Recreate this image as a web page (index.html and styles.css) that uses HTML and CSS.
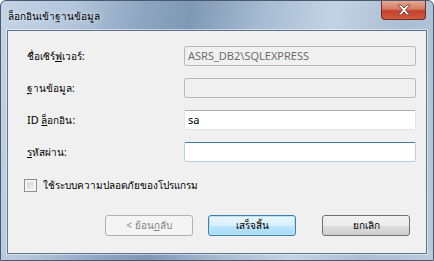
FILE: index.html
```html
<!DOCTYPE html>
<html lang="th">
  <head>
    <meta charset="UTF-8" />
    <title>ล็อกอินเข้าฐานข้อมูล</title>
    <link rel="stylesheet" href="styles.css">
  </head>
  <body>
    <div class="window">
      <div class="titlebar">
        <span class="title">ล็อกอินเข้าฐานข้อมูล</span>
        <div class="close">
          <svg width="16" height="12" viewBox="0 0 16 12">
            <path d="M2 1h3l3 3 3-3h3l-4.5 5 4.5 5h-3l-3-3-3 3h-3l4.5-5z" fill="#fff" stroke="#6d2a20" stroke-width="0.8" stroke-linejoin="round"/>
          </svg>
        </div>
      </div>
      <div class="client">
        <div class="form">
          <label class="label">ชื่อเซิร์<u>ฟ</u>เวอร์:</label>
          <div class="field disabled">ASRS_DB2\SQLEXPRESS</div>

          <label class="label"><u>ฐ</u>านข้อมูล:</label>
          <div class="field disabled"></div>

          <label class="label"><span class="latin">ID</span> <u>ล็</u>อกอิน:</label>
          <div class="field">sa</div>

          <label class="label"><u>ร</u>หัสผ่าน:</label>
          <div class="field focused"></div>
        </div>

        <div class="check">
          <span class="box"></span>
          <span>ใช้ระบบความปลอดภัยของโปรแกรม</span>
        </div>

        <div class="buttons">
          <div class="btn off">&lt; ย้อน<u>ก</u>ลับ</div>
          <div class="btn default">เสร็จสิ้น</div>
          <div class="btn cancel">ยกเลิก</div>
        </div>
      </div>
    </div>
  </body>
</html>
```

FILE: styles.css
```css
body {
  margin: 0;
  font-family: Tahoma, "Noto Sans", "DejaVu Sans", sans-serif;
  font-size: 10px;
  color: #000;
}

.window {
  width: 434px;
  height: 261px;
  box-sizing: border-box;
  border: 1px solid #4a5a6e;
  border-radius: 6px 6px 0 0;
  background: linear-gradient(
    100deg,
    #c4d4e6 0%,
    #b3c6db 15%,
    #8ea6c1 30%,
    #7f98b5 40%,
    #a6bbd1 55%,
    #c3d3e3 70%,
    #aabed3 85%,
    #b9cadb 100%
  );
  display: flex;
  flex-direction: column;
}

.titlebar {
  height: 29px;
  display: flex;
  align-items: flex-start;
  justify-content: space-between;
}

.title {
  margin: 8px 0 0 7px;
  color: #000;
  text-shadow: 0 0 6px rgba(255, 255, 255, 0.9);
}

.close {
  width: 45px;
  height: 19px;
  margin-right: 7px;
  box-sizing: border-box;
  border: 1px solid #6e2e24;
  border-top: none;
  border-radius: 0 0 4px 4px;
  background: linear-gradient(#e3a895 0%, #d47a62 45%, #c2402a 55%, #d35b3f 100%);
  display: flex;
  align-items: center;
  justify-content: center;
}

.client {
  margin: 0 6px 6px 6px;
  flex: 1;
  background: #f0f0f0;
  border: 1px solid #5f7289;
  box-shadow: 0 0 0 1px rgba(255, 255, 255, 0.5);
  display: flex;
  flex-direction: column;
}

.form {
  display: grid;
  grid-template-columns: 157px 232px;
  grid-auto-rows: 20px;
  row-gap: 12px;
  padding: 15px 0 0 19px;
  align-items: center;
}

.latin {
  font-size: 11px;
}

.label u,
.btn u {
  text-decoration-thickness: 1px;
}

.field {
  height: 20px;
  box-sizing: border-box;
  background: #fff;
  border: 1px solid #e2e3ea;
  border-top-color: #abadb3;
  border-radius: 2px;
  padding: 0 3px;
  font-size: 11px;
  line-height: 18px;
}

.field.disabled {
  background: #f0f0f0;
  border-color: #b8b8b8;
  color: #6d6d6d;
}

.field.focused {
  border-color: #b5cfe7;
  border-top-color: #3d7bad;
}

.check {
  height: 13px;
  line-height: 13px;
  display: flex;
  align-items: center;
  gap: 6px;
  margin: 17px 0 0 16px;
}

.box {
  width: 13px;
  height: 13px;
  box-sizing: border-box;
  border: 1px solid #8e8f8f;
  background: linear-gradient(135deg, #cbcfd5, #f6f6f6);
  box-shadow: inset 0 0 0 2px #f4f4f4;
}

.buttons {
  display: flex;
  justify-content: flex-end;
  margin: 23px 16px 0 0;
}

.btn {
  width: 88px;
  height: 21px;
  box-sizing: border-box;
  border: 1px solid #707070;
  border-radius: 3px;
  background: linear-gradient(#f2f2f2 0%, #ebebeb 50%, #dddddd 51%, #cfcfcf 100%);
  display: flex;
  align-items: center;
  justify-content: center;
}

.btn.off {
  border-color: #adb2b5;
  background: #f4f4f4;
  color: #838383;
}

.btn.default {
  margin-left: 15px;
  border-color: #3c7fb1;
  box-shadow: inset 0 0 0 1px #b8e3f8;
  background: linear-gradient(#eaf6fd 0%, #d9f0fc 50%, #bee6fd 51%, #a7d9f5 100%);
}

.btn.cancel {
  margin-left: 26px;
}
```
